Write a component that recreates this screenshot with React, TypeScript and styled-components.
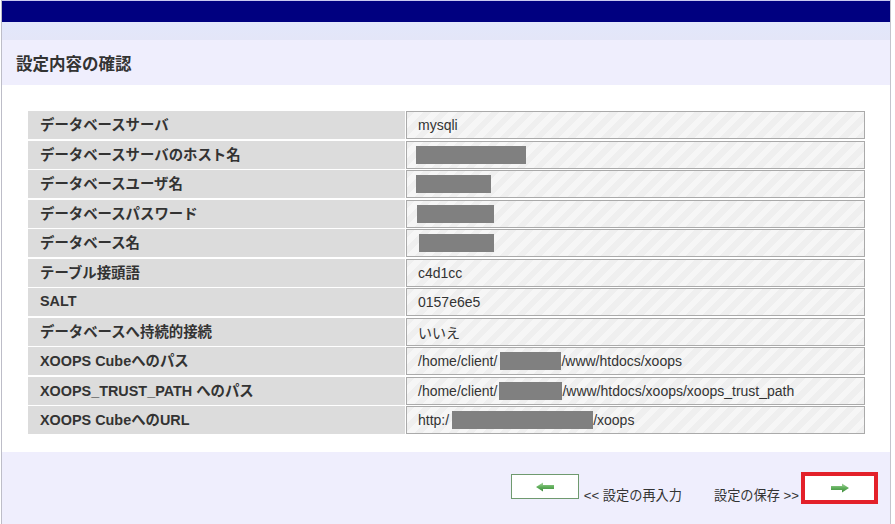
import * as React from 'react';
import styled, { createGlobalStyle } from 'styled-components';

const GlobalStyle = createGlobalStyle`
    html, body {
        margin: 0;
        padding: 0;
        background: #ffffff;
    }
    body {
        font-family: "Liberation Sans", Arial, "Noto Sans CJK JP", sans-serif;
        color: #333333;
    }
`;

const Frame = styled.div`
    width: 888px;
    margin-left: 1px;
    border-left: 1px solid #bdbdc8;
    border-right: 1px solid #c4c4cc;
    min-height: 524px;
    display: flex;
    flex-direction: column;
`;

const TopBar = styled.div`
    height: 21px;
    border-top: 1px solid #c8c8f0;
    background: #000080;
`;

const SubBar = styled.div`
    height: 18px;
    background: linear-gradient(#e2e7fb, #e4e6f8);
`;

const Header = styled.div`
    height: 45px;
    background: #efeefd;
    display: flex;
    align-items: center;
    padding-left: 14px;
`;

const Title = styled.h1`
    margin: 0;
    font-size: 16.5px;
    font-weight: bold;
    color: #333333;
    font-family: "Liberation Sans", "Noto Sans CJK JP", sans-serif;
`;

const Content = styled.div`
    background: #ffffff;
    padding: 26px 25px 18px 26px;
`;

const Table = styled.div`
    display: grid;
    grid-template-columns: 377px 1fr;
    grid-auto-rows: 28px;
    column-gap: 1px;
    row-gap: 1.5px;
`;

const Label = styled.div`
    background: #dcdcdc;
    font-size: 14.4px;
    font-weight: bold;
    color: #333333;
    padding-left: 12px;
    display: flex;
    align-items: center;
    padding-bottom: 3px;
    font-family: "Liberation Sans", "Noto Sans CJK JP", sans-serif;
`;

const Value = styled.div`
    border: 1px solid #aaaaaa;
    background: repeating-linear-gradient(
        -45deg,
        #efefef 0px,
        #efefef 6px,
        #f6f6f6 6px,
        #f6f6f6 12px
    );
    font-size: 14px;
    color: #333333;
    padding-left: 11px;
    display: flex;
    align-items: center;
    white-space: nowrap;
    font-family: "Liberation Sans", "Noto Sans CJK JP", sans-serif;
`;

const Masked = styled.span<{ $w: number; $ml?: number }>`
    display: inline-block;
    width: ${p => p.$w}px;
    height: 18px;
    margin-left: ${p => p.$ml ?? 0}px;
    background: #808080;
`;

const Footer = styled.div`
    flex: 1;
    background: #efeefd;
    display: flex;
    justify-content: flex-end;
    align-items: flex-start;
    padding: 20px 12px 0 0;
`;

const NavButton = styled.button`
    width: 68px;
    height: 25px;
    margin-top: 2px;
    background: #ffffff;
    border: 1px solid #6f9a6f;
    display: flex;
    align-items: center;
    justify-content: center;
    padding: 0;
    cursor: pointer;
`;

const Highlight = styled.div`
    border: 4px solid #e3202a;
    width: 69px;
    height: 24px;
    background: #ffffff;
    display: flex;
    align-items: center;
    justify-content: center;
`;

const NavText = styled.span<{ $gap: number }>`
    font-size: 13.2px;
    color: #333333;
    margin: 13px ${p => p.$gap}px 0 5px;
    font-family: "Liberation Sans", "Noto Sans CJK JP", sans-serif;
`;

const Arrow = ({ dir }: { dir: 'left' | 'right' }) => (
    <svg width="20" height="10" viewBox="0 0 20 10">
        <defs>
            <linearGradient id={`g-${dir}`} x1="0" y1="0" x2="0" y2="1">
                <stop offset="0" stopColor="#a8d6a0" />
                <stop offset="0.5" stopColor="#5fae5a" />
                <stop offset="1" stopColor="#3f8c3d" />
            </linearGradient>
        </defs>
        <path
            d={dir === 'right'
                ? 'M1 3 H12 V0.5 L19 5 L12 9.5 V7 H1 Z'
                : 'M19 3 H8 V0.5 L1 5 L8 9.5 V7 H19 Z'}
            fill={`url(#g-${dir})`}
        />
    </svg>
);

type Row = { label: string; value: React.ReactNode };

const rows: Row[] = [
    { label: 'データベースサーバ', value: 'mysqli' },
    { label: 'データベースサーバのホスト名', value: <Masked $w={110} $ml={-2} /> },
    { label: 'データベースユーザ名', value: <Masked $w={75} $ml={-2} /> },
    { label: 'データベースパスワード', value: <Masked $w={77} $ml={-1} /> },
    { label: 'データベース名', value: <Masked $w={75} $ml={1} /> },
    { label: 'テーブル接頭語', value: 'c4d1cc' },
    { label: 'SALT', value: '0157e6e5' },
    { label: 'データベースへ持続的接続', value: 'いいえ' },
    { label: 'XOOPS Cubeへのパス', value: <>/home/client/<Masked $w={61} $ml={3} />/www/htdocs/xoops</> },
    { label: 'XOOPS_TRUST_PATH へのパス', value: <>/home/client/<Masked $w={63} $ml={2} />/www/htdocs/xoops/xoops_trust_path</> },
    { label: 'XOOPS CubeへのURL', value: <>http:/<Masked $w={141} $ml={3} />/xoops</> },
];

export default function App() {
    return <>
        <GlobalStyle />
        <Frame>
            <TopBar />
            <SubBar />
            <Header>
                <Title>設定内容の確認</Title>
            </Header>
            <Content>
                <Table>
                    {rows.map(r => <React.Fragment key={r.label}>
                        <Label>{r.label}</Label>
                        <Value>{r.value}</Value>
                    </React.Fragment>)}
                </Table>
            </Content>
            <Footer>
                <NavButton><Arrow dir="left" /></NavButton>
                <NavText $gap={27}>&lt;&lt; 設定の再入力</NavText>
                <NavText $gap={2}>設定の保存 &gt;&gt;</NavText>
                <Highlight><Arrow dir="right" /></Highlight>
            </Footer>
        </Frame>
    </>;
}
